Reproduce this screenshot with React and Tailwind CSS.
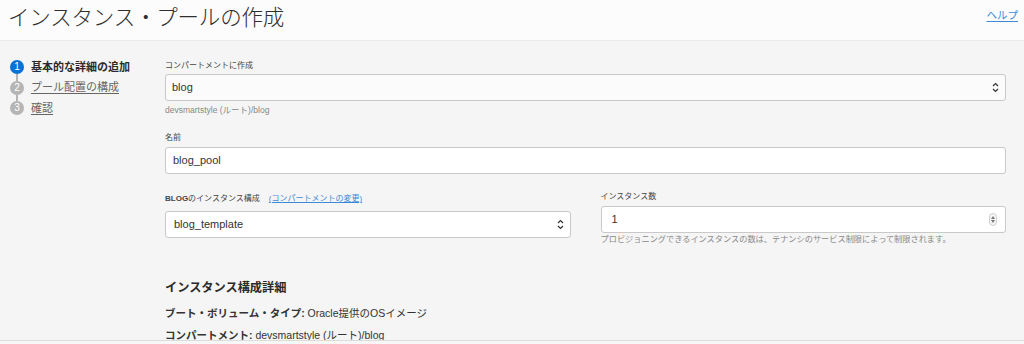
import React from 'react'

const font = { fontFamily: '"Liberation Sans", "Noto Sans CJK JP", sans-serif' }

function SelectArrows() {
  return (
    <svg width="7" height="11" viewBox="0 0 7 11" className="shrink-0">
      <path d="M1 4 L3.5 1.5 L6 4" fill="none" stroke="#333" strokeWidth="1.2" />
      <path d="M1 7 L3.5 9.5 L6 7" fill="none" stroke="#333" strokeWidth="1.2" />
    </svg>
  )
}

function Spinner() {
  return (
    <div className="w-[8px] h-[13px] rounded-[4px] border border-[#cfcfcf] bg-[#f6f6f6] flex flex-col items-center justify-center gap-[1px]">
      <svg width="4" height="3" viewBox="0 0 4 3"><path d="M0 3 L2 0 L4 3 Z" fill="#777" /></svg>
      <svg width="4" height="3" viewBox="0 0 4 3"><path d="M0 0 L2 3 L4 0 Z" fill="#777" /></svg>
    </div>
  )
}

function Label({ children }) {
  return <div className="text-[8px] leading-[12px] text-[#444]">{children}</div>
}

function Step({ n, text, active }) {
  return (
    <div className="flex items-center h-[14px]">
      <div
        className={`w-[14px] h-[14px] rounded-full flex items-center justify-center text-white text-[10px] leading-none shrink-0 ml-[10px] ${active ? 'bg-[#0a71d4]' : 'bg-[#b5b5b5]'}`}
      >
        {n}
      </div>
      <span
        className={`ml-[7px] text-[11px] leading-none ${active ? 'font-bold text-[#2b2b2b]' : 'text-[#666] underline underline-offset-2'}`}
      >
        {text}
      </span>
    </div>
  )
}

function Connector() {
  return <div className="ml-[16px] w-[1.5px] h-[6.5px] bg-[#b5b5b5]" />
}

export default function App() {
  return (
    <div className="relative w-[1024px] h-[344px] overflow-hidden bg-[#f5f5f5] text-[#333]" style={font}>
      <header className="h-[41px] bg-[#fcfcfc] border-b border-[#ebebeb] flex items-start justify-between px-[8px]">
        <h1 className="text-[21.5px] leading-[30px] mt-[3px] font-light text-[#2f2f2f] tracking-[-0.2px]">
          インスタンス・プールの作成
        </h1>
        <a href="#" className="text-[10.5px] mt-[8px] mr-[-2px] text-[#3a8ad6] underline underline-offset-2">
          ヘルプ
        </a>
      </header>

      <div className="flex">
        <nav className="w-[165px] shrink-0 pt-[19px]">
          <Step n="1" text="基本的な詳細の追加" active />
          <Connector />
          <Step n="2" text="プール配置の構成" />
          <Connector />
          <Step n="3" text="確認" />
        </nav>

        <main className="w-[841px] pt-[19px]">
          <Label>コンパートメントに作成</Label>
          <div className="mt-[2px] h-[27px] rounded-[3px] border border-[#c9c9c9] bg-[#fbfbfb] flex items-center justify-between pl-[6px] pr-[6px]">
            <span className="text-[11px]">blog</span>
            <SelectArrows />
          </div>
          <div className="mt-[3px] text-[8.5px] leading-[12px] text-[#888]">devsmartstyle (ルート)/blog</div>

          <div className="mt-[16px]">
            <Label>名前</Label>
          </div>
          <div className="mt-[3px] h-[27px] rounded-[3px] border border-[#c9c9c9] bg-white flex items-center pl-[7px]">
            <span className="text-[11px]">blog_pool</span>
          </div>

          <div className="mt-[16px] grid grid-cols-2 gap-x-[30px]">
            <div className="pt-[3px]">
              <div className="text-[8px] leading-[12px] text-[#444] flex items-center">
                <span><span className="font-bold">BLOG</span>のインスタンス構成</span>
                <a href="#" className="ml-[9px] text-[#3a8ad6] underline underline-offset-1">(コンパートメントの変更)</a>
              </div>
              <div className="mt-[6px] h-[27px] rounded-[3px] border border-[#c9c9c9] bg-white flex items-center justify-between pl-[8px] pr-[6px]">
                <span className="text-[11px]">blog_template</span>
                <SelectArrows />
              </div>
            </div>
            <div>
              <div className="pt-[1px]">
                <Label>インスタンス数</Label>
              </div>
              <div className="mt-[3px] h-[27px] rounded-[3px] border border-[#c9c9c9] bg-white flex items-center justify-between pl-[10px] pr-[8px]">
                <span className="text-[11px]">1</span>
                <Spinner />
              </div>
              <div className="pt-[1px] text-[8.2px] leading-[12px] text-[#888]">
                プロビジョニングできるインスタンスの数は、テナンシのサービス制限によって制限されます。
              </div>
            </div>
          </div>

          <h2 className="mt-[34px] text-[12.2px] leading-[16px] font-bold text-[#2b2b2b]">インスタンス構成詳細</h2>
          <div className="mt-[10px] text-[10.5px] leading-[14px]">
            <span className="font-bold">ブート・ボリューム・タイプ:</span> Oracle提供のOSイメージ
          </div>
          <div className="mt-[8px] text-[10.5px] leading-[14px]">
            <span className="font-bold">コンパートメント:</span> devsmartstyle (ルート)/blog
          </div>
        </main>
      </div>

      <footer className="absolute left-0 right-0 top-[340px] h-[10px] bg-[#f7f7f7] border-t border-[#dcdcdc]" />
    </div>
  )
}
